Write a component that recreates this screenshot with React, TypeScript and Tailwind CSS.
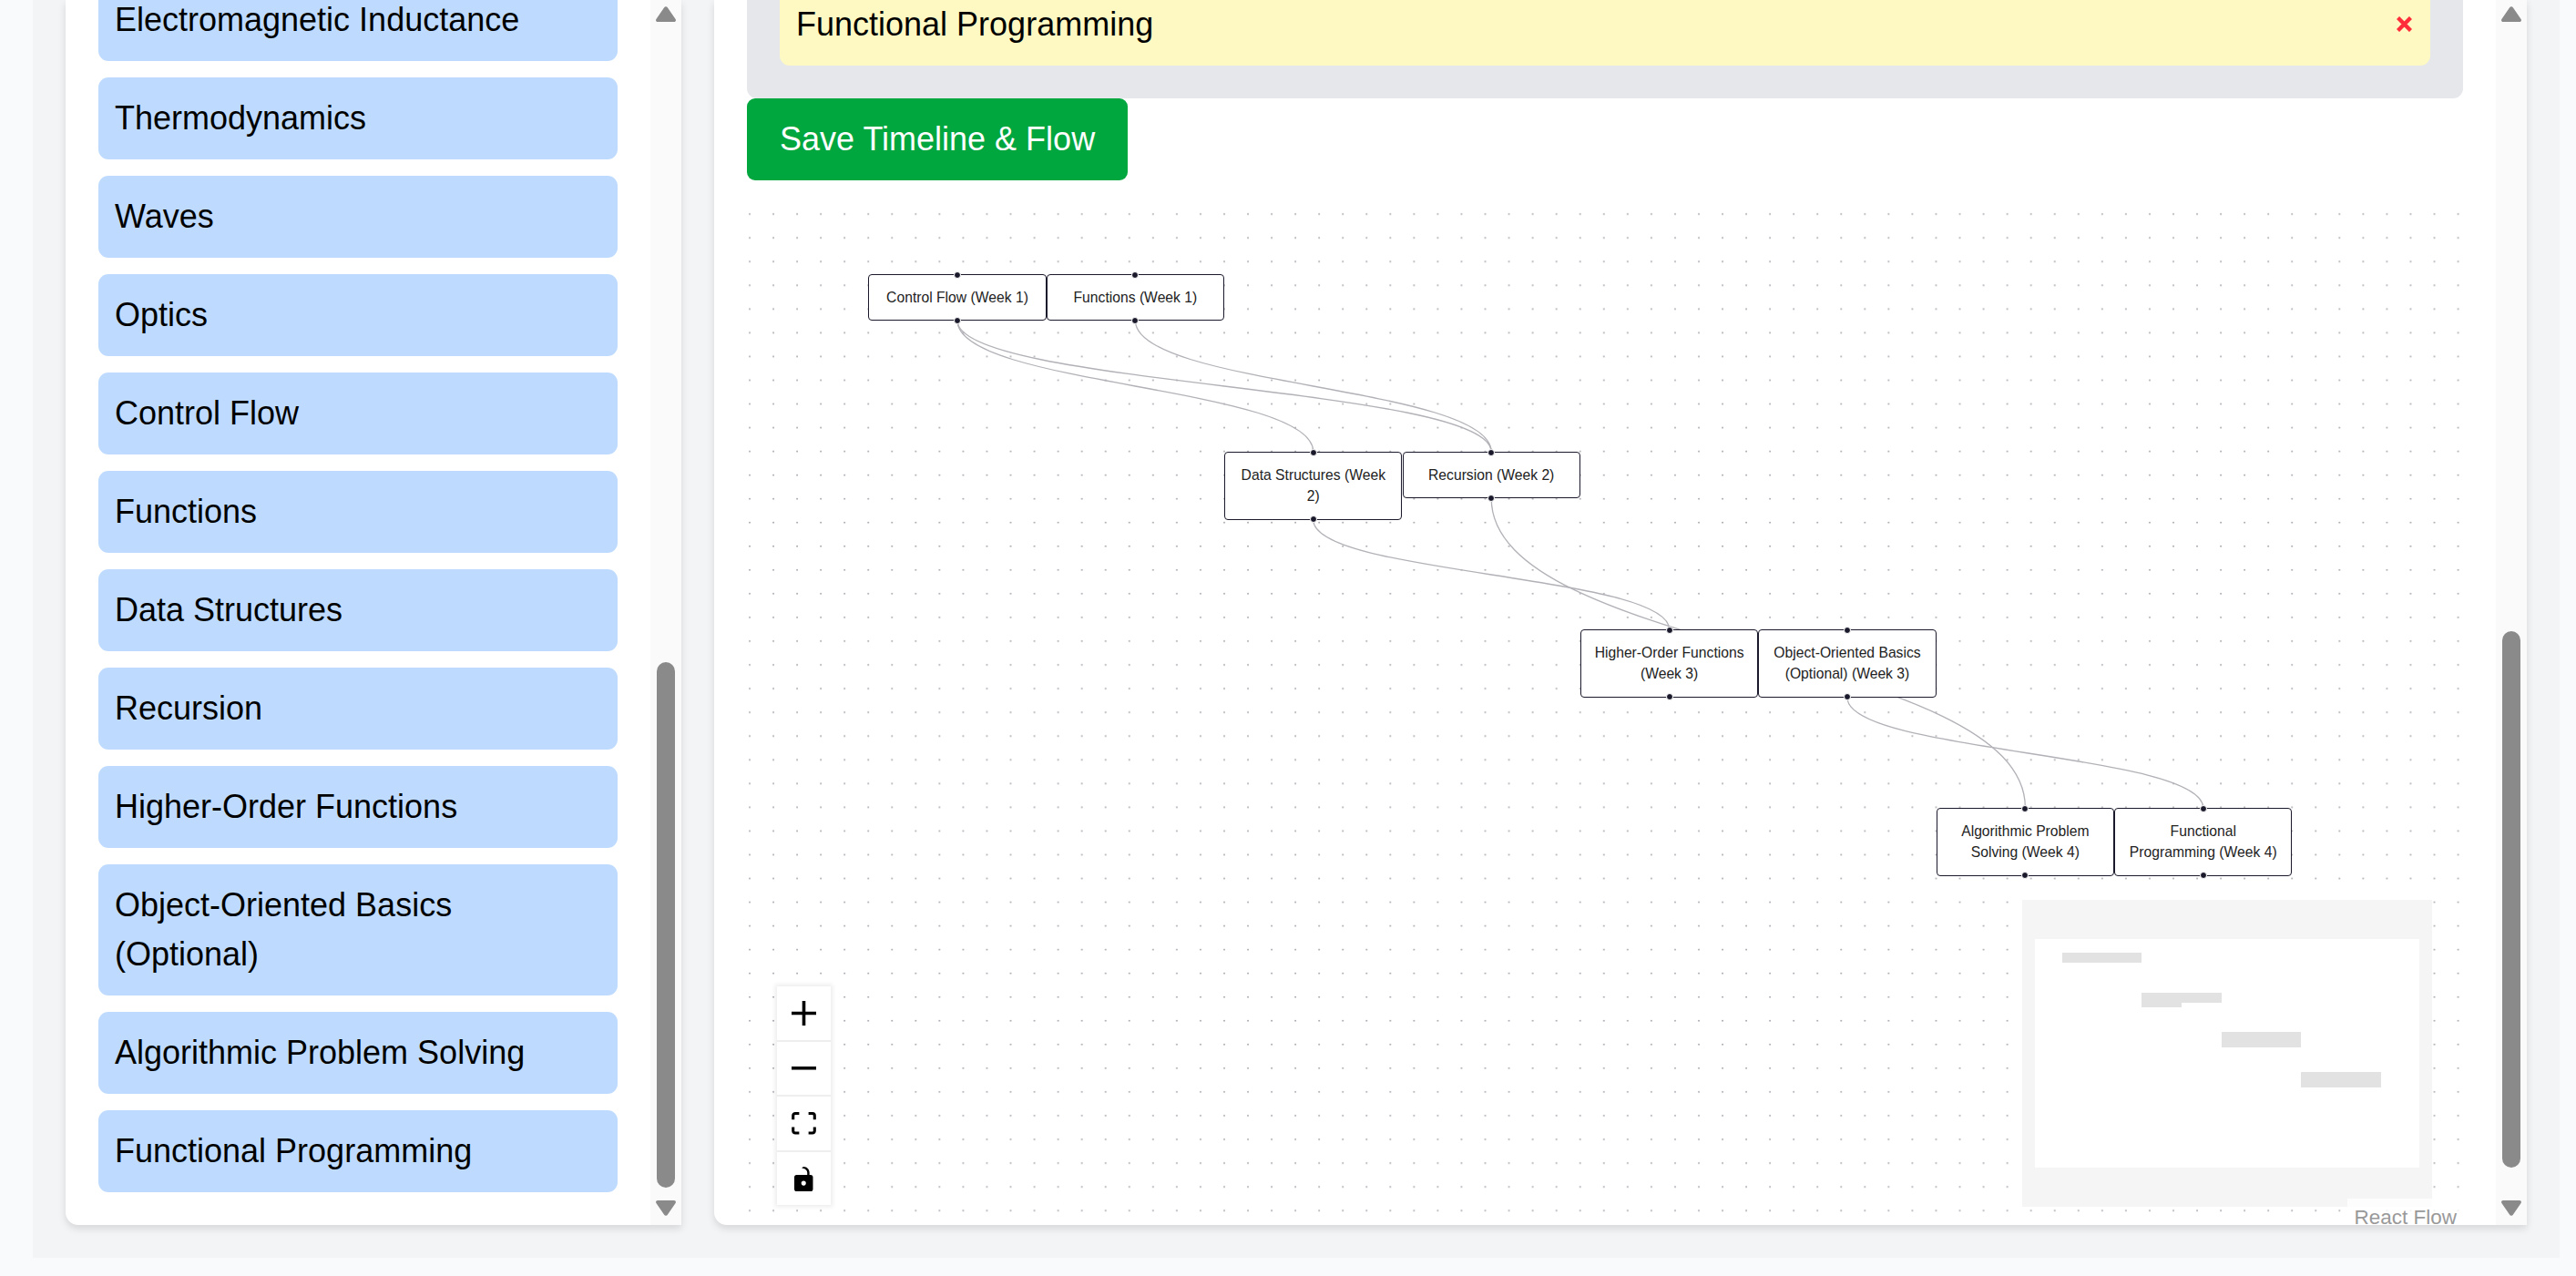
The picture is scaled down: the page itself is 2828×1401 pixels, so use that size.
const topics = [
  "Electromagnetic Inductance",
  "Thermodynamics",
  "Waves",
  "Optics",
  "Control Flow",
  "Functions",
  "Data Structures",
  "Recursion",
  "Higher-Order Functions",
  "Object-Oriented Basics (Optional)",
  "Algorithmic Problem Solving",
  "Functional Programming",
];

// flow nodes, coordinates relative to the canvas
const nodes = [
  { label: "Control Flow (Week 1)", pos: "left-[132.3px] top-[85px]" },
  { label: "Functions (Week 1)", pos: "left-[327.7px] top-[85px]" },
  { label: "Data Structures (Week 2)", pos: "left-[523.1px] top-[280px]" },
  { label: "Recursion (Week 2)", pos: "left-[718.5px] top-[280px]" },
  { label: "Higher-Order Functions (Week 3)", pos: "left-[913.9px] top-[475px]" },
  { label: "Object-Oriented Basics (Optional) (Week 3)", pos: "left-[1109.3px] top-[475px]" },
  { label: "Algorithmic Problem Solving (Week 4)", pos: "left-[1304.7px] top-[671px]" },
  { label: "Functional Programming (Week 4)", pos: "left-[1500.1px] top-[671px]" },
];

const edges = [
  [230, 136, 620.8, 280],
  [230, 136, 816.2, 280],
  [425.4, 136, 816.2, 280],
  [620.8, 355, 1011.6, 475],
  [816.2, 331, 1402.4, 671],
  [1207, 550, 1597.8, 671],
];

const miniNodes = [
  [2264, 1046, 87, 11],
  [2351, 1090, 44, 16],
  [2395, 1090, 44, 11],
  [2439, 1133, 87, 17],
  [2526, 1177, 88, 17],
];

function Arrow({ down = false }: { down?: boolean }) {
  return (
    <svg className="w-[22px] h-[17px] shrink-0" viewBox="0 0 22 17" fill="#8a8a8a">
      <path
        d={down ? "M2 0h18c1.6 0 2.5 1.6 1.6 3L13 15.5c-1 1.6-3 1.6-4 0L.4 3C-.5 1.6.4 0 2 0z" : "M2 17h18c1.6 0 2.5-1.6 1.6-3L13 1.5c-1-1.6-3-1.6-4 0L.4 14C-.5 15.4.4 17 2 17z"}
      />
    </svg>
  );
}

function FlowCanvas() {
  return (
    <div className="relative mt-[18px] ml-px h-[1129px] w-[1883px]">
      <svg className="absolute inset-0 w-full h-full">
        <defs>
          <pattern id="dots" width="26.05" height="26.05" patternUnits="userSpaceOnUse">
            <circle cx="2" cy="19" r="1" fill="#a8a8ae" />
          </pattern>
        </defs>
        <rect width="100%" height="100%" fill="url(#dots)" />
        {edges.map(([sx, sy, tx, ty], i) => {
          const my = (sy + ty) / 2;
          return (
            <path
              key={i}
              d={`M${sx},${sy} C${sx},${my} ${tx},${my} ${tx},${ty}`}
              fill="none"
              stroke="#b1b1b7"
              strokeWidth="1.3"
            />
          );
        })}
      </svg>

      {nodes.map((n) => (
        <div
          key={n.label}
          className={`absolute ${n.pos} w-[195.4px] bg-white border-[1.5px] border-[#1a192b] rounded-[4px] p-[13px] text-center text-[15.7px] leading-[23.4px] text-[#222]`}
        >
          {n.label}
          <span className="absolute -top-[4.5px] left-1/2 -ml-[4px] w-[8px] h-[8px] rounded-full bg-[#1a192b] border border-white" />
          <span className="absolute -bottom-[4.5px] left-1/2 -ml-[4px] w-[8px] h-[8px] rounded-full bg-[#1a192b] border border-white" />
        </div>
      ))}

      {/* zoom / fit / lock */}
      <div className="absolute left-[32px] top-[867px] w-[59px] shadow-[0_0_5px_2px_rgba(0,0,0,0.08)]">
        <div className="h-[61px] flex items-center justify-center bg-white border-b-[2px] border-[#eee]">
          <svg className="w-[27px] h-[27px]" viewBox="0 0 32 32">
            <path d="M32 18.133H18.133V32h-4.266V18.133H0v-4.266h13.867V0h4.266v13.867H32z" />
          </svg>
        </div>
        <div className="h-[60px] flex items-center justify-center bg-white border-b-[2px] border-[#eee]">
          <svg className="w-[27px]" viewBox="0 0 32 5">
            <path d="M0 0h32v4.2H0z" />
          </svg>
        </div>
        <div className="h-[61px] flex items-center justify-center bg-white border-b-[2px] border-[#eee]">
          <svg className="w-[27px] h-[25px]" viewBox="0 0 32 30">
            <path d="M3.692 4.63c0-.53.4-.938.939-.938h5.215V0H4.708C2.13 0 0 2.054 0 4.63v5.216h3.692V4.631zM27.354 0h-5.2v3.692h5.17c.53 0 .984.4.984.939v5.215H32V4.631A4.624 4.624 0 0027.354 0zm.954 24.83c0 .532-.4.94-.939.94h-5.215v3.768h5.215c2.577 0 4.631-2.13 4.631-4.707v-5.139h-3.692v5.139zm-23.677.94c-.531 0-.939-.4-.939-.94v-5.138H0v5.139c0 2.577 2.13 4.707 4.708 4.707h5.138V25.77H4.631z" />
          </svg>
        </div>
        <div className="h-[58px] flex items-center justify-center bg-white">
          <svg className="w-[21px] h-[27px]" viewBox="0 0 25 32">
            <path d="M21.333 10.667H19.81V7.619C19.81 3.429 16.38 0 12.19 0c-4.114 1.828-1.37 2.133.305 2.438 1.676.305 4.42 2.59 4.42 5.181v3.048H3.047A3.056 3.056 0 000 13.714v15.238A3.056 3.056 0 003.048 32h18.285a3.056 3.056 0 003.048-3.048V13.714a3.056 3.056 0 00-3.048-3.047zM12.19 24.533a3.056 3.056 0 01-3.047-3.047 3.056 3.056 0 013.047-3.048 3.056 3.056 0 013.048 3.048 3.056 3.056 0 01-3.048 3.047z" />
          </svg>
        </div>
      </div>

      {/* minimap */}
      <svg className="absolute left-[1399px] top-[772px] w-[450px] h-[337px]" viewBox="2220 988 450 337">
        <rect x="2220" y="988" width="450" height="337" fill="#f5f5f5" />
        <rect x="2234" y="1031" width="422" height="251" fill="#fff" />
        {miniNodes.map(([x, y, w, h], i) => (
          <rect key={i} x={x} y={y} width={w} height={h} fill="#e2e2e2" />
        ))}
      </svg>

      <div className="absolute right-0 top-[1100px] bg-white/80 pl-[7px] pr-[7px] pt-[4px] text-[22.5px] leading-[34px] text-[#999] whitespace-nowrap">
        React Flow
      </div>
    </div>
  );
}

export default function App() {
  return (
    <div className="h-[1401px] overflow-hidden bg-gray-50 font-['Liberation_Sans',Arial,sans-serif] text-[36px] leading-[54px] text-black">
      <div className="ml-[36px] mr-[18px] h-[1381px] bg-gray-100 flex gap-[36px] px-[36px]">
        {/* topics */}
        <div className="flex w-[676px] h-[1345px] bg-white rounded-bl-[14px] shadow-[0_4px_8px_rgba(0,0,0,0.12)] overflow-hidden">
          <div className="w-[642px] px-[36px] -mt-[23px] flex flex-col gap-[18px]">
            {topics.map((t) => (
              <div key={t} className="bg-blue-200 rounded-[11px] p-[18px]">
                {t}
              </div>
            ))}
          </div>
          <div className="w-[34px] bg-[#fafafa] flex flex-col items-center pt-[7px]">
            <Arrow />
            <div className="mt-[703px] w-[20px] h-[577px] rounded-full bg-[#8a8a8a]" />
            <div className="mt-[14px]">
              <Arrow down />
            </div>
          </div>
        </div>

        {/* timeline */}
        <div className="flex flex-1 h-[1345px] bg-white rounded-bl-[14px] shadow-[0_4px_8px_rgba(0,0,0,0.12)] overflow-hidden">
          <div className="w-[1956px] pl-[36px] pr-[36px]">
            <div className="-mt-[54px] bg-gray-200 rounded-[11px] px-[36px] py-[36px]">
              <div className="flex items-center justify-between bg-yellow-100 rounded-[11px] p-[18px]">
                <span>Functional Programming</span>
                <svg className="w-[17px] h-[17px] mr-[2px] -mt-[1px]" viewBox="0 0 17 17" fill="none" stroke="#ff2d3a" strokeWidth="4.4">
                  <path d="M1.5 1.5l14 14M15.5 1.5l-14 14" />
                </svg>
              </div>
            </div>
            <button className="block w-[418px] h-[90px] bg-green-600 rounded-[9px] text-white text-left pl-[36px]">
              Save Timeline &amp; Flow
            </button>
            <FlowCanvas />
          </div>
          <div className="w-[34px] bg-[#fafafa] flex flex-col items-center pt-[7px]">
            <Arrow />
            <div className="mt-[669px] w-[20px] h-[589px] rounded-full bg-[#8a8a8a]" />
            <div className="mt-[36px]">
              <Arrow down />
            </div>
          </div>
        </div>
      </div>
    </div>
  );
}
